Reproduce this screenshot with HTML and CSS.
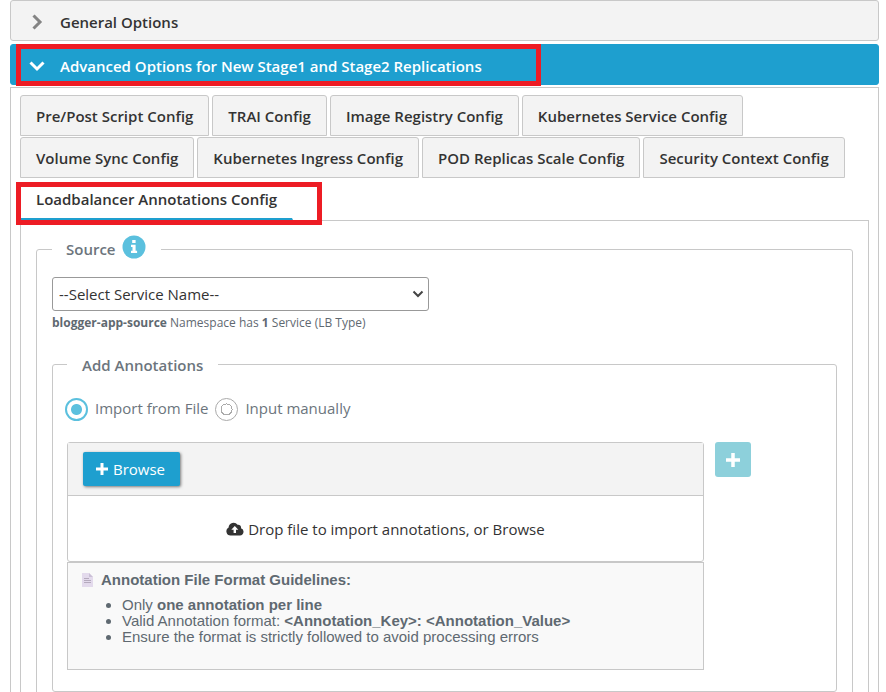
FILE: index.html
```html
<!DOCTYPE html>
<html lang="en">
<head>
  <meta charset="UTF-8" />
  <meta name="viewport" content="width=device-width, initial-scale=1.0" />
  <title>Advanced Options</title>
  <link rel="stylesheet" href="styles.css">
</head>
<body>
  <main class="accordion">
    <button type="button" class="accordion-header" aria-expanded="false">
      <svg class="chevron" viewBox="0 0 24 24"><path d="M8.500 5.500l6.500 6.500-6.500 6.500" /></svg>
      <span>General Options</span>
    </button>

    <button type="button" class="accordion-header active" aria-expanded="true">
      <svg class="chevron" viewBox="0 0 24 24"><path d="M5.500 8.500l6.500 6.500 6.500-6.500" /></svg>
      <span>Advanced Options for New Stage1 and Stage2 Replications</span>
    </button>

    <section class="accordion-content">
      <div class="tabs" role="tablist">
        <button type="button" class="tab" role="tab">Pre/Post Script Config</button>
        <button type="button" class="tab" role="tab">TRAI Config</button>
        <button type="button" class="tab" role="tab">Image Registry Config</button>
        <button type="button" class="tab" role="tab">Kubernetes Service Config</button>
        <button type="button" class="tab" role="tab">Volume Sync Config</button>
        <button type="button" class="tab" role="tab">Kubernetes Ingress Config</button>
        <button type="button" class="tab" role="tab">POD Replicas Scale Config</button>
        <button type="button" class="tab" role="tab">Security Context Config</button>
        <button type="button" class="tab active" role="tab" aria-selected="true">Loadbalancer Annotations Config</button>
      </div>

      <div class="tab-panel" role="tabpanel">
        <fieldset class="group source">
          <legend>
            <span>Source</span>
            <svg class="info-icon" viewBox="0 0 24 24">
              <circle cx="12" cy="12" r="11.500" />
              <path d="M10.200 5h3.400v3h-3.400zM9 9.800h4.600v6h1.500v2.200H9v-2.200h1.500V12H9z" />
            </svg>
          </legend>

          <div class="select-wrap">
            <select class="service-select" id="service" aria-label="Service name">
              <option>--Select Service Name--</option>
            </select>
            <svg class="select-arrow" viewBox="0 0 12 8"><path d="M1.500 1.500L6 6l4.500-4.500" /></svg>
          </div>
          <p class="note"><b>blogger-app-source</b> Namespace has <b>1</b> Service (LB Type)</p>

          <fieldset class="group annotations">
            <legend>Add Annotations</legend>

            <div class="radios">
              <input type="radio" name="mode" id="modeFile" checked>
              <label for="modeFile">Import from File</label>
              <input type="radio" name="mode" id="modeManual">
              <label for="modeManual">Input manually</label>
            </div>

            <div class="import-row">
              <div class="import-col">
                <div class="upload">
                  <div class="upload-bar">
                    <button type="button" class="browse-btn">
                      <svg class="plus" viewBox="0 0 12 12"><path d="M6 0v12M0 6h12" /></svg>
                      Browse
                    </button>
                  </div>
                  <div class="drop-zone">
                    <svg class="cloud" viewBox="0 0 18 14">
                      <path class="cloud-body" d="M4.500 13.500A4.200 4.200 0 0 1 2.600 5.600 5 5 0 0 1 11.600 2.800 2.900 2.900 0 0 1 15 6.300a3.700 3.700 0 0 1-1 7.200z" />
                      <path class="cloud-arrow" d="M8.800 4l3.500 3.700H10V11H7.600V7.700H5.300z" />
                    </svg>
                    <span>Drop file to import annotations, or Browse</span>
                  </div>
                </div>
                <div class="guidelines">
                  <h4>
                    <svg class="page-icon" viewBox="0 0 11 14">
                      <path class="page-sheet" d="M0 0h7l4 4v10H0z" />
                      <path class="page-fold" d="M7 0v4h4z" />
                      <path class="page-lines" d="M2 5.500h5M2 7.500h7M2 9.500h7" />
                    </svg>
                    Annotation File Format Guidelines:
                  </h4>
                  <ul>
                    <li>Only <b>one annotation per line</b></li>
                    <li>Valid Annotation format: <b>&lt;Annotation_Key&gt;: &lt;Annotation_Value&gt;</b></li>
                    <li>Ensure the format is strictly followed to avoid processing errors</li>
                  </ul>
                </div>
              </div>
              <button type="button" class="add-btn" aria-label="Add">
                <svg class="plus" viewBox="0 0 12 12"><path d="M6 0v12M0 6h12" /></svg>
              </button>
            </div>
          </fieldset>
        </fieldset>
      </div>
    </section>

    <div class="highlight highlight-header"></div>
    <div class="highlight highlight-tab"></div>
  </main>
</body>
</html>
```
FILE: styles.css
```css
* {
  box-sizing: border-box;
}

html {
  scrollbar-width: none;
}

body {
  margin: 0;
  background: #fff;
  color: #333;
  font-family: "Open Sans", sans-serif;
  font-size: 15px;
  line-height: 22px;
}

button, select {
  font: inherit;
  color: inherit;
}

button {
  cursor: pointer;
}

.accordion {
  position: relative;
  padding: 0 7px 0 10px;
}

.accordion-header {
  display: flex;
  align-items: center;
  gap: 11px;
  width: 100%;
  height: 41px;
  margin-bottom: 3px;
  padding: 3px 14px 0;
  border: 1px solid #c8c8c8;
  border-radius: 3px;
  background: #f3f3f3;
  font-weight: 600;
  text-align: left;
}

.accordion-header.active {
  margin-bottom: 2px;
  border-color: #1e9fcf;
  background: #1e9fcf;
  color: #fff;
}

.chevron {
  width: 24px;
  height: 24px;
  fill: none;
  stroke: #848484;
  stroke-width: 3;
}

.active .chevron {
  stroke: #fff;
}

.accordion-content {
  padding: 7px 9px 15px;
  border: 1px solid #c8c8c8;
}

.tabs {
  display: flex;
  flex-wrap: wrap;
  gap: 1px 3px;
}

.tab {
  height: 41px;
  padding: 0 15px;
  border: 1px solid #c8c8c8;
  border-radius: 3px 3px 0 0;
  background: #f3f3f3;
  font-weight: 600;
}

.tab.active {
  border-color: transparent;
  border-bottom: 2px solid #1e9fcf;
  border-radius: 0;
  background: #fff;
}

.tab-panel {
  padding: 13px 15px 15px;
  border: 1px solid #c8c8c8;
}

.group {
  min-width: 0;
  margin: 0;
  border: 1px solid #c8c8c8;
  border-radius: 3px;
}

.group legend {
  padding: 0 15px 0 14px;
  color: #6c757d;
  font-weight: 600;
}

.source {
  padding: 13px 15px 15px;
}

.source > legend {
  display: flex;
  align-items: center;
  gap: 6px;
  height: 30px;
  line-height: 24px;
}

.info-icon {
  width: 24px;
  height: 24px;
  margin-bottom: 4px;
  fill: #5bc0de;
}

.info-icon path {
  fill: #fff;
}

.select-wrap {
  position: relative;
  width: 48%;
}

.service-select {
  appearance: none;
  display: block;
  width: 100%;
  height: 34px;
  padding: 0 24px 0 6px;
  border: 1px solid #999;
  border-radius: 3px;
  background: #fff;
}

.select-arrow {
  position: absolute;
  top: 13px;
  right: 5px;
  width: 12px;
  height: 8px;
  fill: none;
  stroke: #444;
  stroke-width: 2;
  pointer-events: none;
}

.note {
  margin: 3px 0 20px;
  color: #5f6971;
  font-size: 12px;
  line-height: 18px;
}

.annotations {
  padding: 21px 15px 21px 14px;
}

.annotations > legend {
  height: 24px;
  padding: 0 15px;
  line-height: 26px;
}

.radios {
  display: flex;
  align-items: center;
  gap: 7px;
  height: 24px;
  margin: 0 0 21px -2px;
  color: #6c757d;
}

.radios label {
  padding-bottom: 3px;
}

.radios input {
  appearance: none;
  width: 23px;
  height: 23px;
  margin: 0;
  border: 1px solid #aaa;
  border-radius: 50%;
  background: radial-gradient(circle, #fff 5px, #aaa 5px, #aaa 6px, #fff 6px);
}

.radios input:checked {
  border: 2px solid #5bc0de;
  background: radial-gradient(circle, #5bc0de 5px, #fff 6px);
}

.import-row {
  display: grid;
  grid-template-columns: 6fr 1fr;
  align-items: start;
  gap: 11px;
}

.upload {
  border: 1px solid #c8c8c8;
  border-radius: 3px;
}

.upload-bar {
  padding: 9px 15px;
  border-bottom: 1px solid #c8c8c8;
  background: #f3f3f3;
}

.browse-btn {
  display: flex;
  align-items: center;
  gap: 5px;
  height: 34px;
  padding: 0 15px 0 13px;
  border: 0;
  border-radius: 2px;
  background: #1e9fcf;
  box-shadow: 1px 1px 3px rgba(0, 0, 0, 0.5);
  color: #fff;
}

.plus {
  width: 12px;
  height: 12px;
  stroke: currentColor;
  stroke-width: 3;
}

.drop-zone {
  display: flex;
  align-items: center;
  justify-content: center;
  gap: 4px;
  height: 65px;
}

.cloud {
  width: 18px;
  height: 14px;
}

.cloud-body {
  fill: #333;
}

.cloud-arrow {
  fill: #fff;
}

.guidelines {
  padding: 8px 14px 24px;
  border: 1px solid #c8c8c8;
  background: #f9f9f9;
  color: #5f6971;
  font-family: "Liberation Sans", Arial, sans-serif;
  line-height: 16px;
}

.guidelines h4 {
  display: flex;
  align-items: center;
  gap: 8px;
  height: 18px;
  margin: 0 0 8px;
  font-size: 15px;
}

.guidelines ul {
  margin: 0;
  padding-left: 40px;
}

.page-icon {
  width: 11px;
  height: 14px;
}

.page-sheet {
  fill: #e3daec;
}

.page-fold {
  fill: #cabfd6;
}

.page-lines {
  stroke: #b5aabd;
}

.add-btn {
  display: flex;
  align-items: center;
  justify-content: center;
  width: 36px;
  height: 35px;
  padding: 0;
  border: 0;
  border-radius: 3px;
  background: #8dd0db;
  color: #fff;
}

.add-btn .plus {
  width: 14px;
  height: 14px;
}

/* red callout frames drawn over the page */
.highlight {
  position: absolute;
  left: 16px;
  border: 5px solid #ed1c24;
  pointer-events: none;
}

.highlight-header {
  top: 44px;
  width: 525px;
  height: 42px;
}

.highlight-tab {
  top: 182px;
  width: 306px;
  height: 43px;
}
```
